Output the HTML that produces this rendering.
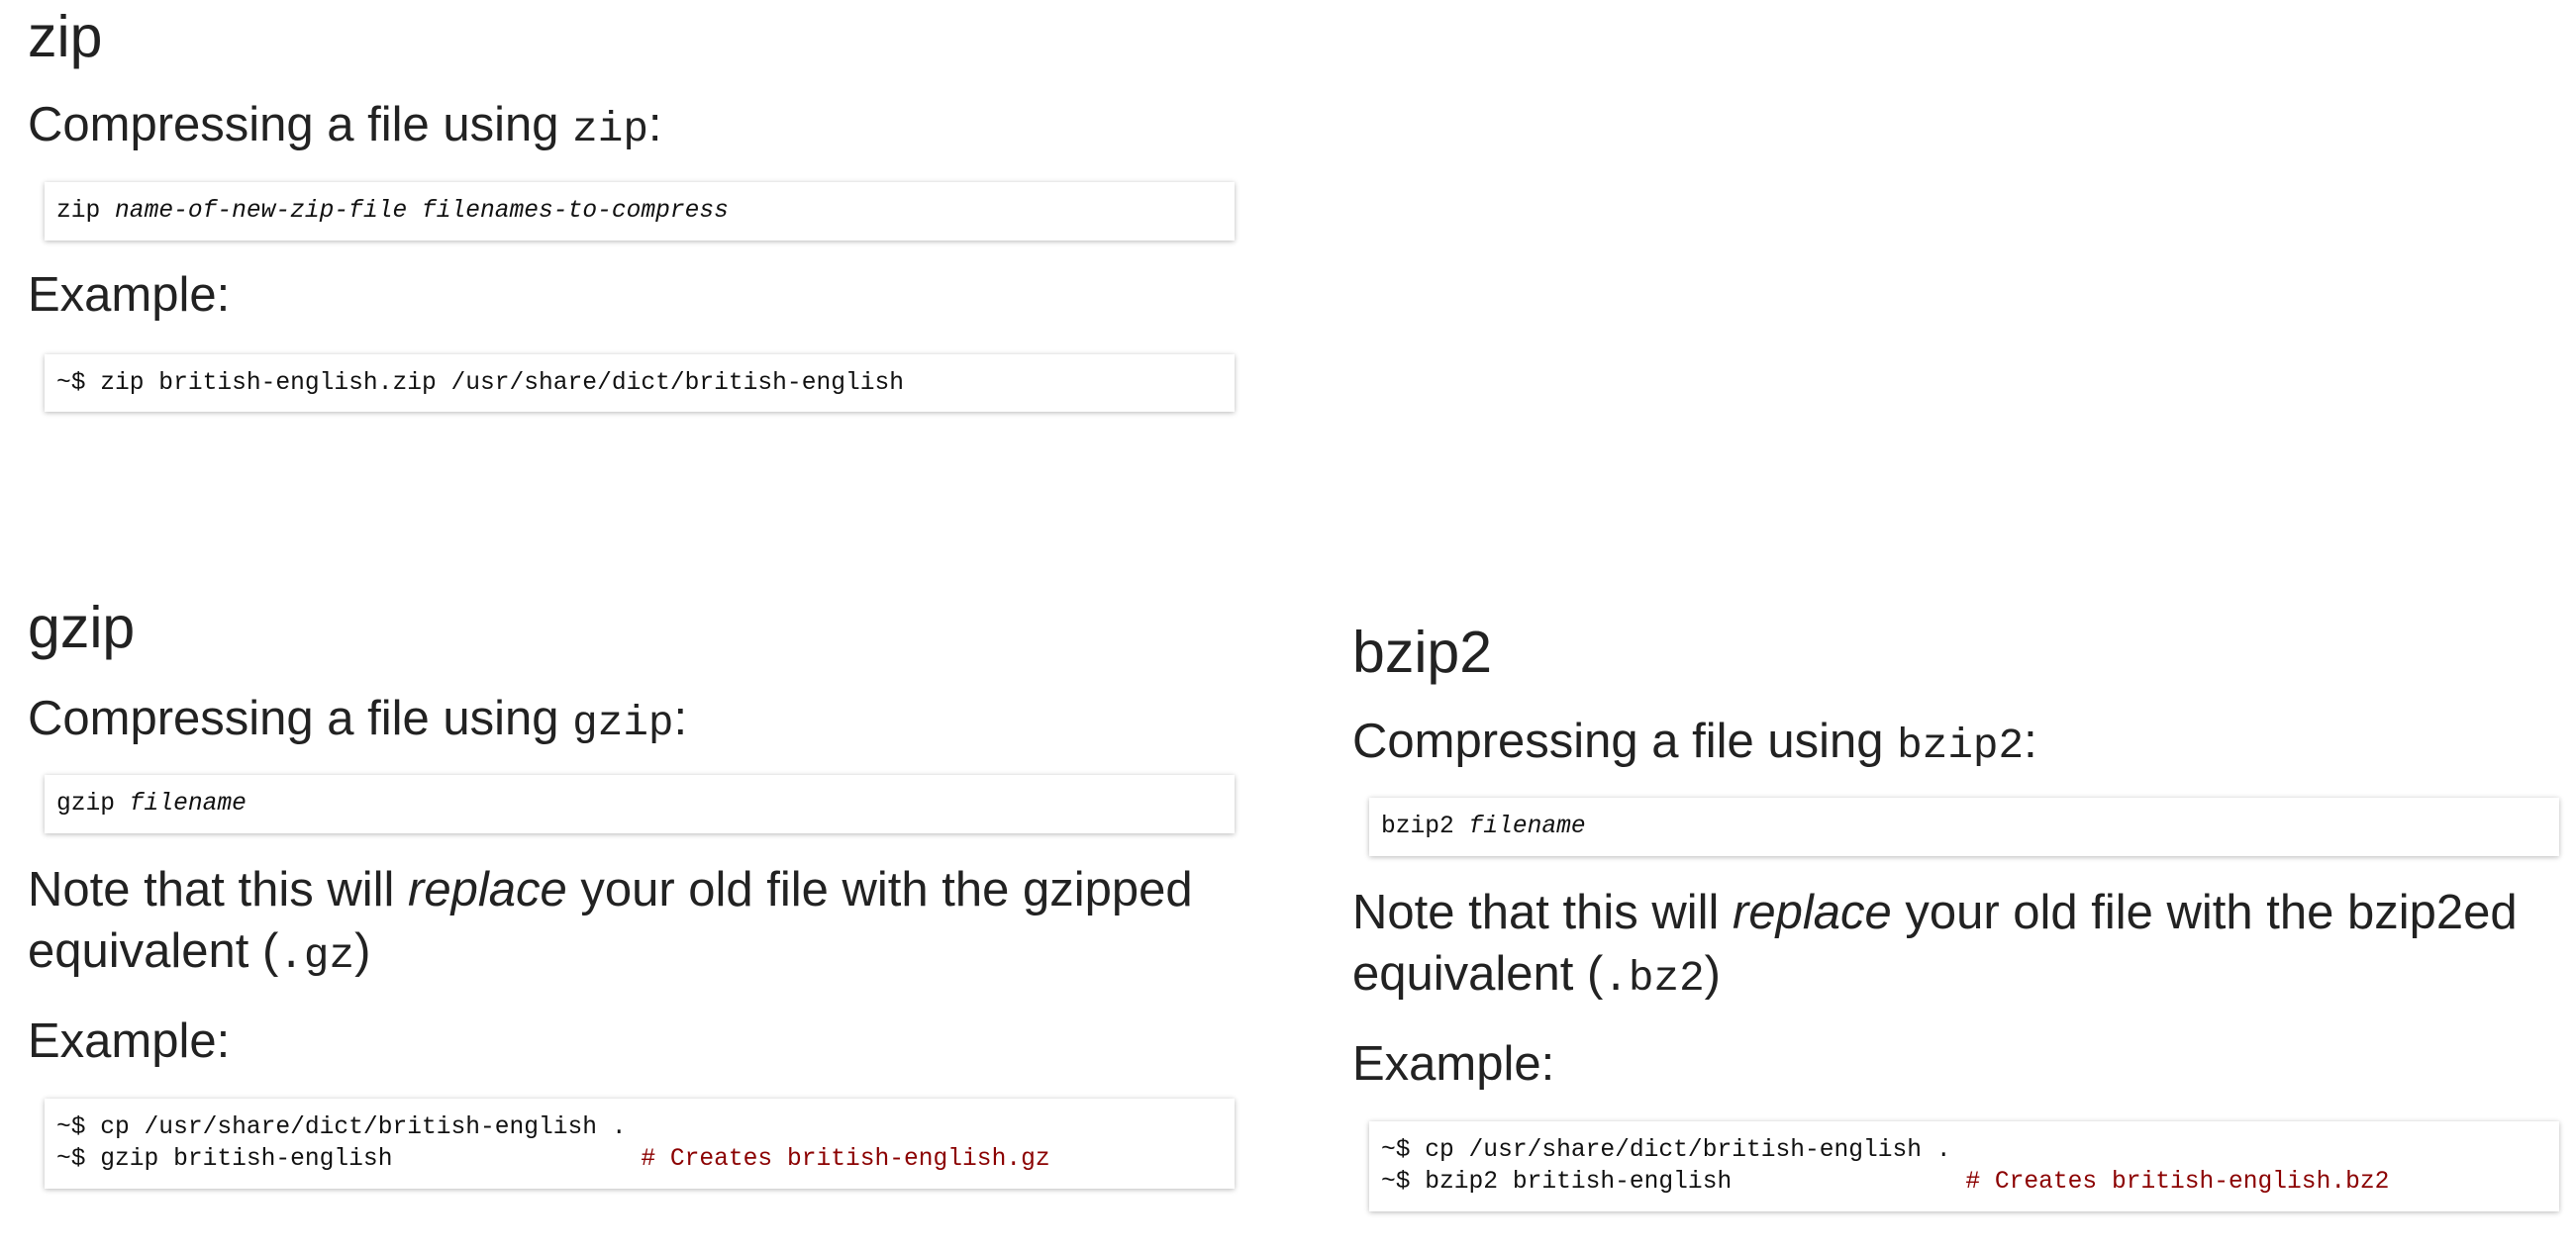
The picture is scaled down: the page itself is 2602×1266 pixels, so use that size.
<!DOCTYPE html>
<html><head><meta charset="utf-8"><style>
html,body{margin:0;padding:0;background:#fff;width:2602px;height:1266px;overflow:hidden;position:relative}
body{font-family:"Liberation Sans",Arial,sans-serif;color:#222}
.a{position:absolute;margin:0;white-space:nowrap}
.h{font-size:59px;line-height:1.15;font-weight:normal}
.t{font-size:49px;line-height:1.15}
.n{font-size:49px;line-height:62px}
code{font-family:"Liberation Mono",monospace;font-size:0.87em}
.box{position:absolute;background:#fff;box-shadow:0 1px 5px rgba(0,0,0,0.28);font-family:"Liberation Mono",monospace;font-size:24.6px;line-height:32px;padding:14px 12px 13px 12px;box-sizing:border-box;width:1202px;white-space:pre;color:#111}
.c{color:#8b0000}
</style></head><body>
<h2 class="a h" style="left:28px;top:4px">zip</h2>
<p class="a t" style="left:28px;top:98px">Compressing a file using <code>zip</code>:</p>
<div class="box" style="left:45px;top:184px;height:59px">zip <i>name-of-new-zip-file filenames-to-compress</i></div>
<p class="a t" style="left:28px;top:270px">Example:</p>
<div class="box" style="left:45px;top:358px;height:58px">~$ zip british-english.zip /usr/share/dict/british-english</div>

<h2 class="a h" style="left:28px;top:601px">gzip</h2>
<p class="a t" style="left:28px;top:698px">Compressing a file using <code>gzip</code>:</p>
<div class="box" style="left:45px;top:783px;height:59px">gzip <i>filename</i></div>
<p class="a n" style="left:28px;top:868px">Note that this will <i>replace</i> your old file with the gzipped<br>equivalent (<code>.gz</code>)</p>
<p class="a t" style="left:28px;top:1024px">Example:</p>
<div class="box" style="left:45px;top:1110px;height:91px">~$ cp /usr/share/dict/british-english .
~$ gzip british-english                 <span class="c"># Creates british-english.gz</span></div>

<h2 class="a h" style="left:1366px;top:626px">bzip2</h2>
<p class="a t" style="left:1366px;top:721px">Compressing a file using <code>bzip2</code>:</p>
<div class="box" style="left:1383px;top:806px;height:59px">bzip2 <i>filename</i></div>
<p class="a n" style="left:1366px;top:891px">Note that this will <i>replace</i> your old file with the bzip2ed<br>equivalent (<code>.bz2</code>)</p>
<p class="a t" style="left:1366px;top:1047px">Example:</p>
<div class="box" style="left:1383px;top:1133px;height:91px">~$ cp /usr/share/dict/british-english .
~$ bzip2 british-english                <span class="c"># Creates british-english.bz2</span></div>
</body></html>
